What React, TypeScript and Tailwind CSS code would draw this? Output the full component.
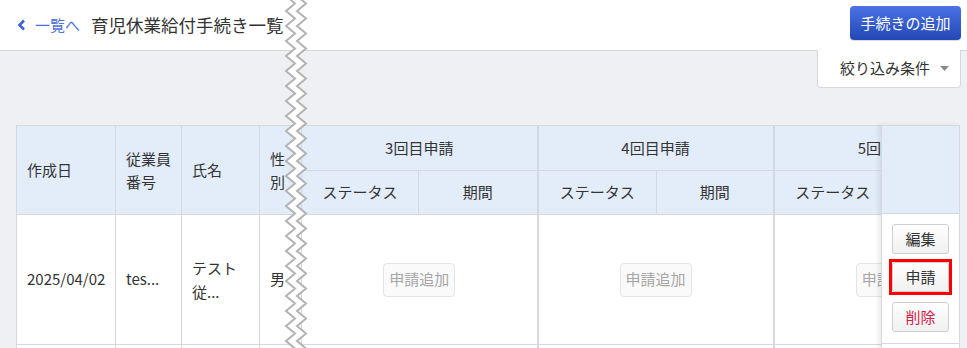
import React from "react";

const FONT = { fontFamily: '"Noto Sans CJK JP", "Noto Sans", sans-serif' };

function Zigzag() {
  const period = 15;
  const amp = 9;
  const h = 360;
  const left: string[] = [];
  const right: string[] = [];
  for (let i = 0, y = -4; y <= h; i++, y += period / 2) {
    const x = i % 2 === 0 ? 2 : 2 + amp;
    left.push(`${x},${y}`);
    right.push(`${x + 11},${y}`);
  }
  const poly = [...left, ...right.slice().reverse()].join(" ");
  return (
    <svg
      className="absolute top-0 left-[284px] pointer-events-none"
      width="26"
      height="348"
      viewBox="0 0 26 348"
    >
      <polygon points={poly} fill="#ffffff" />
      <polyline points={left.join(" ")} fill="none" stroke="#b3b3b3" strokeWidth="2" />
      <polyline points={right.join(" ")} fill="none" stroke="#b3b3b3" strokeWidth="2" />
    </svg>
  );
}

function AddBtn() {
  return (
    <div className="mx-auto w-[72px] h-[34px] flex items-center justify-center rounded-[4px] border border-[#e4e4e4] bg-[#fafafa] text-[#a6a6a6] text-[15px]">
      申請追加
    </div>
  );
}

function ActBtn({ children, red }: { children: React.ReactNode; red?: boolean }) {
  return (
    <div
      className={`w-[57px] h-[30px] flex items-center justify-center rounded-[3px] border border-[#cfcfcf] bg-gradient-to-b from-white to-[#f0f0f0] text-[15px] ${
        red ? "text-[#d81b4a]" : "text-[#333]"
      }`}
    >
      {children}
    </div>
  );
}

export default function App() {
  const th = "border border-[#d5d8de] bg-[#e3edfa] font-normal text-[15px] text-[#333]";
  const td = "border border-[#d5d8de] bg-white text-[15px] text-[#333]";
  return (
    <div className="relative w-[967px] h-[348px] overflow-hidden bg-[#eff0f4]" style={FONT}>
      {/* top bar */}
      <div className="h-[51px] bg-white border-b border-[#d6d7da] flex items-center justify-between pl-[17px] pr-[6px]">
        <div className="flex items-center">
          <svg width="9" height="12" viewBox="0 0 9 12" className="mr-[9px]">
            <polyline points="7,1.5 2.5,6 7,10.5" fill="none" stroke="#3f62dc" strokeWidth="2.6" />
          </svg>
          <span className="text-[15px] text-[#4d6fe0]">一覧へ</span>
          <span className="ml-[11px] text-[17.5px] text-[#333] tracking-[0px]">育児休業給付手続き一覧</span>
        </div>
        <div className="w-[111px] h-[34px] -mt-[4px] flex items-center justify-center rounded-[4px] bg-gradient-to-b from-[#4b73e6] to-[#2347b5] text-white text-[15px] shadow-[0_1px_1px_rgba(0,0,0,0.15)]">
          手続きの追加
        </div>
      </div>

      {/* filter */}
      <div className="flex justify-end pr-[6px]">
        <div className="w-[144px] h-[38px] -mt-px bg-white border border-t-0 border-[#d6d8dc] rounded-b-[4px] flex items-center pl-[22px] pr-[11px] justify-between">
          <span className="text-[15px] text-[#333]">絞り込み条件</span>
          <svg width="9" height="5" viewBox="0 0 9 5">
            <polygon points="0,0 9,0 4.5,5" fill="#8a8a8a" />
          </svg>
        </div>
      </div>

      {/* table */}
      <div className="mt-[37px] ml-[16px] mr-[7px] flex">
        <div className="w-[865px] overflow-hidden">
          <table className="table-fixed border-collapse w-[993px]">
            <colgroup>
              <col className="w-[99px]" />
              <col className="w-[66px]" />
              <col className="w-[78px]" />
              <col className="w-[42px]" />
              <col className="w-[117px]" />
              <col className="w-[119px]" />
              <col className="w-[119px]" />
              <col className="w-[117px]" />
              <col className="w-[118px]" />
              <col className="w-[118px]" />
            </colgroup>
            <thead>
              <tr className="h-[45px]">
                <th rowSpan={2} className={`${th} text-left pl-[10px]`}>作成日</th>
                <th rowSpan={2} className={`${th} text-left pl-[10px] leading-[23px]`}>従業員<br />番号</th>
                <th rowSpan={2} className={`${th} text-left pl-[10px]`}>氏名</th>
                <th rowSpan={2} className={`${th} text-left pl-[10px] leading-[23px]`}>性<br />別</th>
                <th colSpan={2} className={`${th} text-center border-r-2`}>3回目申請</th>
                <th colSpan={2} className={`${th} text-center border-r-2`}>4回目申請</th>
                <th colSpan={2} className={`${th} text-center`}>5回目申請</th>
              </tr>
              <tr className="h-[44px]">
                <th className={`${th} text-center`}>ステータス</th>
                <th className={`${th} text-center border-r-2`}>期間</th>
                <th className={`${th} text-center`}>ステータス</th>
                <th className={`${th} text-center border-r-2`}>期間</th>
                <th className={`${th} text-center`}>ステータス</th>
                <th className={`${th} text-center`}>期間</th>
              </tr>
            </thead>
            <tbody>
              <tr className="h-[130px]">
                <td className={`${td} pl-[10px]`}>2025/04/02</td>
                <td className={`${td} pl-[10px]`}>tes...</td>
                <td className={`${td} pl-[10px] leading-[24px]`}>テスト<br />従...</td>
                <td className={`${td} pl-[10px]`}>男</td>
                <td colSpan={2} className={`${td} border-r-2`}><AddBtn /></td>
                <td colSpan={2} className={`${td} border-r-2`}><AddBtn /></td>
                <td colSpan={2} className={td}><AddBtn /></td>
              </tr>
              <tr className="h-[40px]">
                <td className={td}></td>
                <td className={td}></td>
                <td className={td}></td>
                <td className={td}></td>
                <td colSpan={2} className={`${td} border-r-2`}></td>
                <td colSpan={2} className={`${td} border-r-2`}></td>
                <td colSpan={2} className={td}></td>
              </tr>
            </tbody>
          </table>
        </div>
        {/* sticky action column */}
        <div className="w-[79px] shrink-0 flex flex-col border-r border-[#d5d8de] shadow-[-3px_0_4px_rgba(0,0,0,0.07)] z-10">
          <div className="h-[89px] bg-[#e3edfa] border-t border-b border-l border-[#d5d8de]" />
          <div className="h-[130px] bg-white border-l border-b border-[#d5d8de] flex flex-col items-center pt-[10px]">
            <ActBtn>編集</ActBtn>
            <div className="mt-[5px] border-[3px] border-[#ff0000] p-0">
              <ActBtn>申請</ActBtn>
            </div>
            <div className="mt-[7px]">
              <ActBtn red>削除</ActBtn>
            </div>
          </div>
          <div className="h-[40px] bg-white border-l border-[#d5d8de]" />
        </div>
      </div>

      <Zigzag />
    </div>
  );
}
